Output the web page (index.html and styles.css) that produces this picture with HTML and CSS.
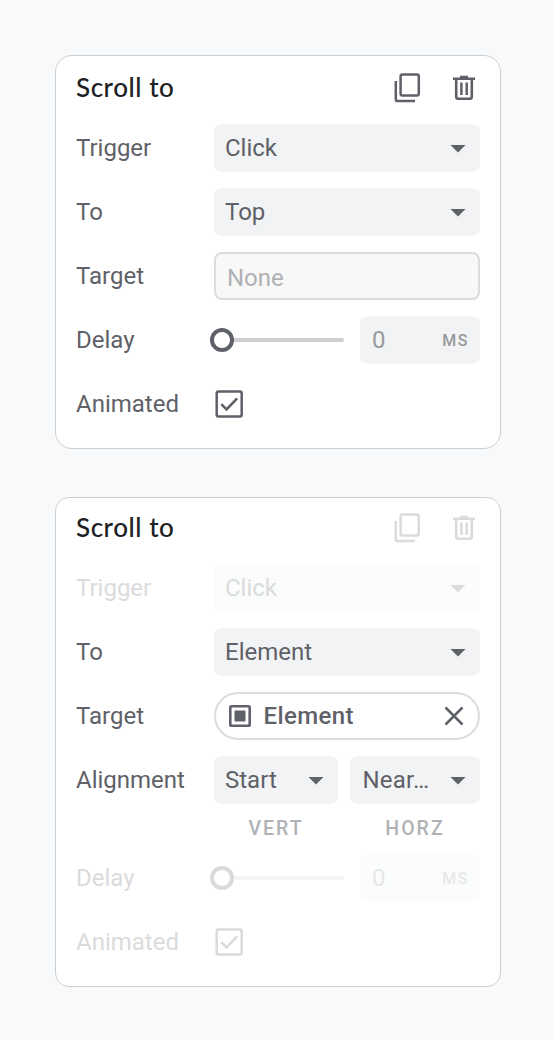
FILE: index.html
```html
<!DOCTYPE html>
<html lang="en">
<head>
<meta charset="utf-8">
<title>Scroll to</title>
<link rel="stylesheet" href="styles.css">
</head>
<body>
<svg class="defs" width="0" height="0" aria-hidden="true">
  <symbol id="copy" viewBox="0 0 32 32">
    <rect x="8.600" y="2.500" width="18.200" height="21" rx="1.800" fill="none" stroke="currentColor" stroke-width="2.500"/>
    <path d="M3.800 9v18.200c0 1.200 .7 1.900 1.900 1.900H23" fill="none" stroke="currentColor" stroke-width="2.500"/>
  </symbol>
  <symbol id="trash" viewBox="0 0 32 32">
    <path d="M5 6.700h22M12 5h8" fill="none" stroke="currentColor" stroke-width="2.600"/>
    <path d="M8.200 7v17.400c0 1.600 .6 2.300 2.200 2.300h11.200c1.600 0 2.200-.7 2.200-2.300V7" fill="none" stroke="currentColor" stroke-width="2.600"/>
    <path d="M13.400 10.500v12.600M18.700 10.500v12.600" fill="none" stroke="currentColor" stroke-width="2.500"/>
  </symbol>
  <symbol id="arrow" viewBox="0 0 16 8"><path d="M.5 0h15L8 7.500z" fill="currentColor"/></symbol>
  <symbol id="check" viewBox="0 0 30 30">
    <rect x="2.700" y="2.500" width="25" height="25" rx="1.700" fill="none" stroke="currentColor" stroke-width="2.500"/>
    <path d="M7.300 15.200l5.200 5.200L23.200 9.400" fill="none" stroke="currentColor" stroke-width="2.600"/>
  </symbol>
  <symbol id="frame" viewBox="0 0 22 22">
    <rect x="1.300" y="1.300" width="19.400" height="19.400" rx="1.300" fill="none" stroke="currentColor" stroke-width="2.600"/>
    <path d="M5.500 5.500h11v11h-11z" fill="currentColor"/>
  </symbol>
  <symbol id="close" viewBox="0 0 20 20"><path d="M1.500 1.500l17 17M18.500 1.500l-17 17" fill="none" stroke="currentColor" stroke-width="2.500"/></symbol>
</svg>

<main class="panels">
  <section class="card">
    <header class="head">
      <h2 class="title">Scroll to</h2>
      <div class="actions"><svg class="action"><use href="#copy"/></svg><svg class="action"><use href="#trash"/></svg></div>
    </header>
    <div class="row"><span class="label">Trigger</span><div class="select"><span>Click</span><svg class="arrow"><use href="#arrow"/></svg></div></div>
    <div class="row"><span class="label">To</span><div class="select"><span>Top</span><svg class="arrow"><use href="#arrow"/></svg></div></div>
    <div class="row"><span class="label">Target</span><div class="input">None</div></div>
    <div class="row"><span class="label">Delay</span><div class="range"><div class="slider"><i class="knob"></i><i class="track"></i></div><div class="number"><span>0</span><span class="unit">MS</span></div></div></div>
    <div class="row"><span class="label">Animated</span><svg class="check"><use href="#check"/></svg></div>
  </section>

  <section class="card card-element">
    <header class="head">
      <h2 class="title">Scroll to</h2>
      <div class="actions faded"><svg class="action"><use href="#copy"/></svg><svg class="action"><use href="#trash"/></svg></div>
    </header>
    <div class="row disabled"><span class="label">Trigger</span><div class="select"><span>Click</span><svg class="arrow"><use href="#arrow"/></svg></div></div>
    <div class="row"><span class="label">To</span><div class="select"><span>Element</span><svg class="arrow"><use href="#arrow"/></svg></div></div>
    <div class="row"><span class="label">Target</span><div class="chip"><svg class="frame"><use href="#frame"/></svg><span class="chip-name">Element</span><svg class="close"><use href="#close"/></svg></div></div>
    <div class="row"><span class="label">Alignment</span><div class="pair"><div class="select"><span>Start</span><svg class="arrow"><use href="#arrow"/></svg></div><div class="select near"><span>Near…</span><svg class="arrow"><use href="#arrow"/></svg></div></div></div>
    <div class="captions"><span>VERT</span><span>HORZ</span></div>
    <div class="row disabled"><span class="label">Delay</span><div class="range"><div class="slider"><i class="knob"></i><i class="track"></i></div><div class="number"><span>0</span><span class="unit">MS</span></div></div></div>
    <div class="row disabled"><span class="label">Animated</span><svg class="check"><use href="#check"/></svg></div>
  </section>
</main>
</body>
</html>
```
FILE: styles.css
```css
* { box-sizing: border-box; }
body {
  margin: 0;
  min-height: 1040px;
  background: #f8f9fb;
  color: #5f6168;
  font: 24px/48px Roboto, sans-serif;
}
.defs { display: block; }
.panels {
  display: flex;
  flex-direction: column;
  gap: 48px;
  padding: 55px 53px 0 55px;
}
.card {
  display: flex;
  flex-direction: column;
  gap: 16px;
  height: 394px;
  padding: 8px 20px 0;
  border: 1px solid #cccfd1;
  border-radius: 17px;
  background: #fff;
}
.card-element { height: 490px; padding-top: 6px; border-radius: 14px; }
.head {
  display: flex;
  justify-content: space-between;
  height: 48px;
  margin-bottom: -4px;
}
.title {
  margin: 0;
  color: #202124;
  font: 500 26px/46px Lato, sans-serif;
  letter-spacing: .55px;
}
.actions { display: flex; align-items: center; gap: 24px; }
.action { width: 32px; height: 32px; }
.row { display: flex; align-items: center; height: 48px; }
.label { width: 138px; flex: none; }
.select {
  display: flex;
  flex: 1;
  align-items: center;
  justify-content: space-between;
  height: 48px;
  padding: 0 14px 0 11px;
  border-radius: 8px;
  background: #f1f3f4;
}
.arrow { width: 16px; height: 8px; margin-top: 1px; }
.input {
  flex: 1;
  height: 48px;
  padding-left: 11px;
  border: 2px solid #dadce0;
  border-radius: 8px;
  background: #f8f8f8;
  color: #b0b1b4;
}
.range { display: flex; flex: 1; gap: 16px; height: 48px; }
.slider { display: flex; align-items: center; width: 134px; margin-left: -4px; }
.knob { width: 24px; height: 24px; border: 4px solid #5f6168; border-radius: 50%; }
.track { flex: 1; height: 4px; border-radius: 0 2px 2px 0; background: #cecfd1; }
.number {
  display: flex;
  flex: 1;
  justify-content: space-between;
  height: 48px;
  padding: 0 11px 0 12px;
  border-radius: 8px;
  background: #f1f3f4;
  color: #98999c;
}
.unit { padding-top: 1px; font-size: 16px; font-weight: 500; letter-spacing: 1.500px; }
.check { width: 30px; height: 30px; }
.chip {
  display: flex;
  flex: 1;
  align-items: center;
  height: 48px;
  padding: 0 14px 0 13px;
  border: 2px solid #dadce0;
  border-radius: 24px;
}
.frame { width: 22px; height: 22px; margin-right: 12.500px; }
.chip-name { flex: 1; font-weight: 500; letter-spacing: .4px; }
.close { width: 20px; height: 20px; margin-left: auto; }
.pair { display: grid; grid-template-columns: 124px 130px; gap: 12px; }
.near { padding-left: 12.500px; }
.near span { letter-spacing: .2px; }
.captions {
  display: grid;
  grid-template-columns: 124px 130px;
  gap: 12px;
  height: 19px;
  margin: -1px 0 0 138px;
  color: #b0b2b5;
  font-size: 19.500px;
  font-weight: 500;
  line-height: 20px;
  letter-spacing: 2px;
  text-align: center;
}
.faded { color: #dadbdc; }
.disabled { color: #dadbdc; }
.disabled .select, .disabled .number { background: #fbfdfc; }
.disabled .number { color: #e7e8e8; }
.disabled .knob { border-color: #d9dadc; }
.disabled .track { background: #f4f4f4; }
```
